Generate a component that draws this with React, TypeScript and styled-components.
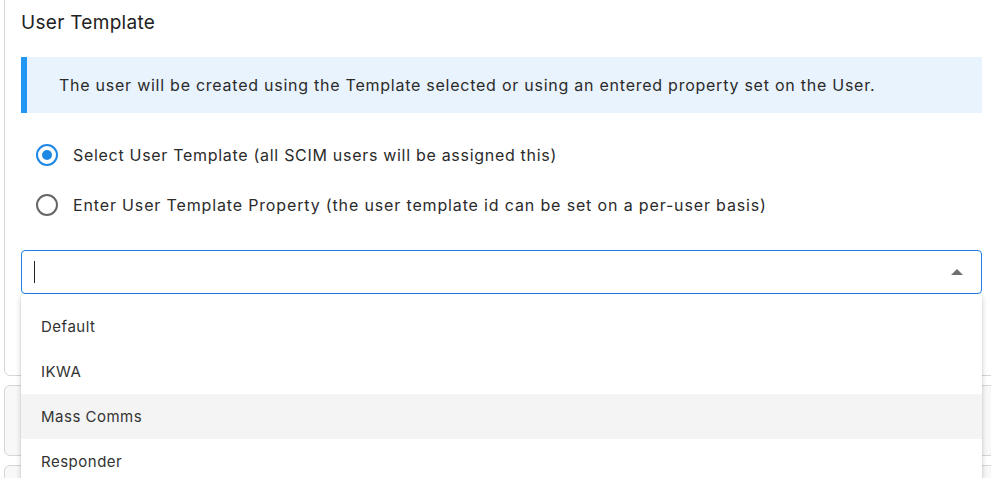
import React from "react";
import styled, { createGlobalStyle } from "styled-components";

const GlobalStyle = createGlobalStyle`
  html, body {
    margin: 0;
    padding: 0;
    background: #ffffff;
    overflow: hidden;
  }
  body {
    font-family: "Inter", "Liberation Sans", sans-serif;
    color: #2b2b2b;
  }
`;

const Page = styled.div`
  width: 991px;
  height: 478px;
  overflow: hidden;
  padding-left: 4px;
  display: flex;
  flex-direction: column;
  gap: 9px;
  box-sizing: border-box;
`;

const Card = styled.div<{ muted?: boolean }>`
  width: 994px;
  border: 1px solid #d6d6d6;
  border-radius: 6px;
  background: ${(p) => (p.muted ? "#f8f8f8" : "#ffffff")};
  box-sizing: border-box;
  flex-shrink: 0;
`;

const MainCard = styled(Card)`
  margin-top: -10px;
  padding: 20px 15px 81px 16px;
  position: relative;
`;

const Content = styled.div`
  width: 961px;
  display: flex;
  flex-direction: column;
`;

const Title = styled.h2`
  margin: 0;
  font-size: 19px;
  font-weight: 400;
  letter-spacing: 0.3px;
  color: #222;
  line-height: 24px;
`;

const InfoBox = styled.div`
  margin-top: 22px;
  height: 56px;
  background: #e8f3fd;
  border-left: 6px solid #2196f3;
  display: flex;
  align-items: center;
  padding-left: 32px;
  font-size: 16px;
  letter-spacing: 0.75px;
  color: #2b2b2b;
`;

const RadioGroup = styled.div`
  margin-top: 30px;
  display: flex;
  flex-direction: column;
  gap: 26px;
  padding-left: 15px;
`;

const RadioRow = styled.label<{ wide?: boolean }>`
  display: flex;
  align-items: center;
  gap: 15px;
  font-size: 16px;
  letter-spacing: ${(p) => (p.wide ? "0.85px" : "0.7px")};
  color: #2b2b2b;
  height: 24px;
`;

const RadioCircle = styled.span<{ checked?: boolean }>`
  width: 22px;
  height: 22px;
  flex-shrink: 0;
  border-radius: 50%;
  border: 2px solid ${(p) => (p.checked ? "#1e88e5" : "#666")};
  box-sizing: border-box;
  display: flex;
  align-items: center;
  justify-content: center;
  &::after {
    content: "";
    width: 10px;
    height: 10px;
    border-radius: 50%;
    background: ${(p) => (p.checked ? "#1e88e5" : "transparent")};
  }
`;

const SelectWrap = styled.div`
  position: relative;
  margin-top: 33px;
`;

const SelectBox = styled.div`
  height: 44px;
  border: 1px solid #1e7fe0;
  border-radius: 4px;
  box-sizing: border-box;
  display: flex;
  align-items: center;
  justify-content: space-between;
  padding: 0 18px 0 12px;
`;

const Caret = styled.span`
  width: 1px;
  height: 22px;
  background: #222;
`;

const Arrow = styled.span`
  width: 0;
  height: 0;
  border-left: 6px solid transparent;
  border-right: 6px solid transparent;
  border-bottom: 6px solid #707070;
`;

const Menu = styled.ul`
  position: absolute;
  top: 44px;
  left: 0;
  right: 0;
  margin: 0;
  padding: 10px 0 0;
  list-style: none;
  background: #fff;
  box-shadow: 0 3px 6px rgba(0, 0, 0, 0.16), 0 1px 3px rgba(0, 0, 0, 0.1);
  border-radius: 0 0 4px 4px;
  z-index: 10;
  height: 200px;
`;

const MenuItem = styled.li<{ active?: boolean }>`
  height: 45px;
  display: flex;
  align-items: center;
  padding-left: 20px;
  font-size: 15px;
  letter-spacing: 0.5px;
  color: #333;
  background: ${(p) => (p.active ? "#f4f4f4" : "transparent")};
`;

const SubCard = styled(Card)`
  height: 71px;
`;

const templates = ["Default", "IKWA", "Mass Comms", "Responder"];

export default function App() {
  return (
    <>
      <GlobalStyle />
      <Page>
        <MainCard>
          <Content>
            <Title>User Template</Title>
            <InfoBox>
              The user will be created using the Template selected or using an entered property set on the User.
            </InfoBox>
            <RadioGroup>
              <RadioRow>
                <RadioCircle checked />
                Select User Template (all SCIM users will be assigned this)
              </RadioRow>
              <RadioRow wide>
                <RadioCircle />
                Enter User Template Property (the user template id can be set on a per-user basis)
              </RadioRow>
            </RadioGroup>
            <SelectWrap>
              <SelectBox>
                <Caret />
                <Arrow />
              </SelectBox>
              <Menu>
                {templates.map((t) => (
                  <MenuItem key={t} active={t === "Mass Comms"}>
                    {t}
                  </MenuItem>
                ))}
              </Menu>
            </SelectWrap>
          </Content>
        </MainCard>
        <SubCard muted />
        <SubCard muted />
      </Page>
    </>
  );
}
